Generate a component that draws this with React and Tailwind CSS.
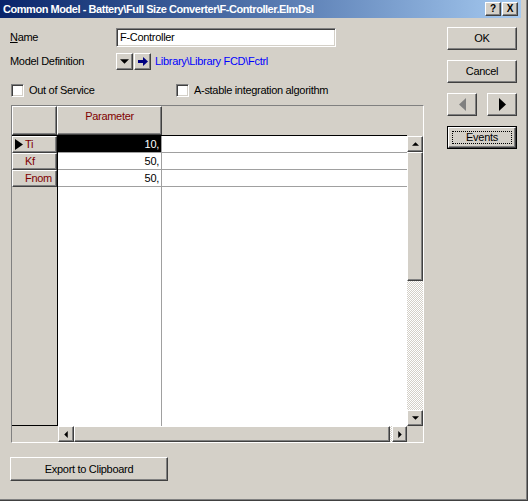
import React from "react";

const raised =
  "border border-t-white border-l-white border-r-[#404040] border-b-[#404040] shadow-[inset_-1px_-1px_0_#808080] bg-[#d4d0c8]";
const sunken =
  "border border-t-[#808080] border-l-[#808080] border-r-white border-b-white shadow-[inset_1px_1px_0_#404040,inset_-1px_-1px_0_#d4d0c8]";
const track =
  "bg-[repeating-conic-gradient(#d4d0c8_0_25%,#ffffff_0_50%)] bg-[length:2px_2px]";

function Tri({ dir = "down", size = 7, color = "#000" }) {
  const pts = {
    down: "0,0 8,0 4,4",
    up: "0,4 8,4 4,0",
    right: "0,0 4,4 0,8",
    left: "4,0 0,4 4,8",
  }[dir];
  const vb = dir === "down" || dir === "up" ? "0 0 8 4" : "0 0 4 8";
  const w = dir === "down" || dir === "up" ? size : size / 2 + 0.5;
  const h = dir === "down" || dir === "up" ? size / 2 + 0.5 : size;
  return (
    <svg width={w} height={h} viewBox={vb}>
      <polygon points={pts} fill={color} />
    </svg>
  );
}

function Checkbox({ label, className = "" }) {
  return (
    <div className={`flex items-center ${className}`}>
      <div className={`w-[13px] h-[13px] bg-white ${sunken}`} />
      <span className="ml-[5px]">{label}</span>
    </div>
  );
}

function RowHead({ label, active }) {
  return (
    <div className={`h-[17px] flex items-center ${raised} relative`}>
      {active && (
        <div className="absolute left-[2px] top-[2px]">
          <svg width="8" height="11" viewBox="0 0 8 11">
            <polygon points="0,0 8,5.5 0,11" fill="#000" />
          </svg>
        </div>
      )}
      <span className="pl-[12px] text-[#800000]">{label}</span>
    </div>
  );
}

function DataRow({ value, selected }) {
  return (
    <div className="h-[17px] flex border-b border-[#a0a0a0]">
      <div
        className={`w-[104px] border-r border-[#a0a0a0] flex items-center justify-end pr-[2px] ${
          selected ? "bg-black text-white" : "bg-white text-black"
        }`}
      >
        {value}
      </div>
      <div className="flex-1 bg-white" />
    </div>
  );
}

export default function App() {
  return (
    <div
      className="w-[528px] h-[501px] bg-[#d4d0c8] border-r border-b border-[#404040] shadow-[inset_-1px_-1px_0_#808080] flex flex-col text-[11px] leading-[13px] tracking-[-0.3px] text-black overflow-hidden"
      style={{ fontFamily: '"Liberation Sans", Arial, sans-serif' }}
    >
      {/* Title bar */}
      <div className="w-[521px] h-[18px] bg-linear-to-r from-[#0a246a] to-[#a6caf0] flex items-center pl-[3px] pr-[3px]">
        <span className="text-white font-bold text-[11px] tracking-[-0.45px] flex-1 whitespace-nowrap">
          Common Model - Battery\Full Size Converter\F-Controller.ElmDsl
        </span>
        <div className={`w-[16px] h-[14px] ${raised} flex items-center justify-center font-bold text-[10px] leading-none tracking-normal`}>
          ?
        </div>
        <div className={`w-[16px] h-[14px] ${raised} flex items-center justify-center font-bold text-[10px] leading-none tracking-normal ml-[1px]`}>
          X
        </div>
      </div>

      <div className="flex flex-1">
        {/* Left column */}
        <div className="w-[447px] pl-[10px] flex flex-col">
          <div className="mt-[10px] flex items-center h-[19px]">
            <span className="w-[106px]">
              <span className="underline">N</span>ame
            </span>
            <div className={`w-[220px] h-[19px] bg-white ${sunken} flex items-center pl-[3px]`}>
              F-Controller
            </div>
          </div>

          <div className="mt-[6px] flex items-center h-[17px]">
            <span className="w-[106px]">Model Definition</span>
            <div className={`w-[17px] h-[17px] ${raised} flex items-center justify-center`}>
              <Tri dir="down" size={9} />
            </div>
            <div className={`w-[17px] h-[17px] ${raised} flex items-center justify-center ml-[1px]`}>
              <svg width="10" height="9" viewBox="0 0 10 9">
                <rect x="0" y="3" width="5" height="3" fill="#000080" />
                <polygon points="5,0 10,4.5 5,9" fill="#000080" />
              </svg>
            </div>
            <span className="ml-[4px] text-[#0000ff]">Library\Library FCD\Fctrl</span>
          </div>

          <div className="mt-[14px] flex items-center h-[13px]">
            <Checkbox label="Out of Service" className="ml-[1px] w-[165px]" />
            <Checkbox label="A-stable integration algorithm" />
          </div>

          {/* Grid */}
          <div className="mt-[8px] ml-[1px] w-[413px] h-[338px] border border-t-[#808080] border-l-[#808080] border-r-white border-b-white flex">
            <div className="w-[395px] flex flex-col">
              {/* header */}
              <div className="h-[30px] flex border-b border-black">
                <div className={`w-[45px] h-full ${raised}`} />
                <div className={`w-[105px] h-full ${raised} flex justify-center pt-[3px] text-[#800000]`}>
                  Parameter
                </div>
                <div className="flex-1" />
              </div>
              {/* body */}
              <div className="flex-1 flex">
                <div className="w-[46px] border-r border-b border-black flex flex-col">
                  <RowHead label="Ti" active />
                  <RowHead label="Kf" />
                  <RowHead label="Fnom" />
                </div>
                <div className="flex-1 bg-white flex flex-col relative">
                  <DataRow value="10," selected />
                  <DataRow value="50," />
                  <DataRow value="50," />
                  <div className="flex-1 flex">
                    <div className="w-[104px] border-r border-[#a0a0a0]" />
                  </div>
                </div>
              </div>
              {/* hscroll */}
              <div className="h-[16px] flex">
                <div className="w-[46px]" />
                <div className={`w-[16px] h-[16px] ${raised} flex items-center justify-center`}>
                  <Tri dir="left" size={7} />
                </div>
                <div className={`w-[316px] h-[16px] ${raised}`} />
                <div className={`flex-1 ${track}`} />
                <div className={`w-[15px] h-[16px] ${raised} flex items-center justify-center`}>
                  <Tri dir="right" size={7} />
                </div>
              </div>
            </div>
            {/* vscroll */}
            <div className="w-[16px] flex flex-col">
              <div className="h-[30px]" />
              <div className={`h-[16px] ${raised} flex items-center justify-center`}>
                <Tri dir="up" size={7} />
              </div>
              <div className={`h-[129px] ${raised}`} />
              <div className={`flex-1 ${track}`} />
              <div className={`h-[16px] ${raised} flex items-center justify-center`}>
                <Tri dir="down" size={7} />
              </div>
              <div className="h-[16px]" />
            </div>
          </div>

          <div className={`mt-[14px] w-[158px] h-[24px] ${raised} flex items-center justify-center`}>
            Export to Clipboard
          </div>
        </div>

        {/* Right column */}
        <div className="w-[70px] flex flex-col pt-[9px]">
          <div className={`h-[23px] ${raised} flex items-center justify-center`}>OK</div>
          <div className={`mt-[10px] h-[23px] ${raised} flex items-center justify-center`}>Cancel</div>
          <div className="mt-[10px] h-[23px] flex justify-between">
            <div className={`w-[30px] h-[23px] ${raised} flex items-center justify-center`}>
              <svg width="7" height="13" viewBox="0 0 7 13">
                <polygon points="7,0 0,6.5 7,13" fill="#808080" />
              </svg>
            </div>
            <div className={`w-[30px] h-[23px] ${raised} flex items-center justify-center`}>
              <svg width="7" height="13" viewBox="0 0 7 13">
                <polygon points="0,0 7,6.5 0,13" fill="#000" />
              </svg>
            </div>
          </div>
          <div className="mt-[10px] h-[23px] border border-black">
            <div className={`h-full ${raised} flex items-center justify-center p-[3px]`}>
              <div className="w-full h-full border border-dotted border-black flex items-center justify-center">
                Events
              </div>
            </div>
          </div>
        </div>
      </div>
    </div>
  );
}
